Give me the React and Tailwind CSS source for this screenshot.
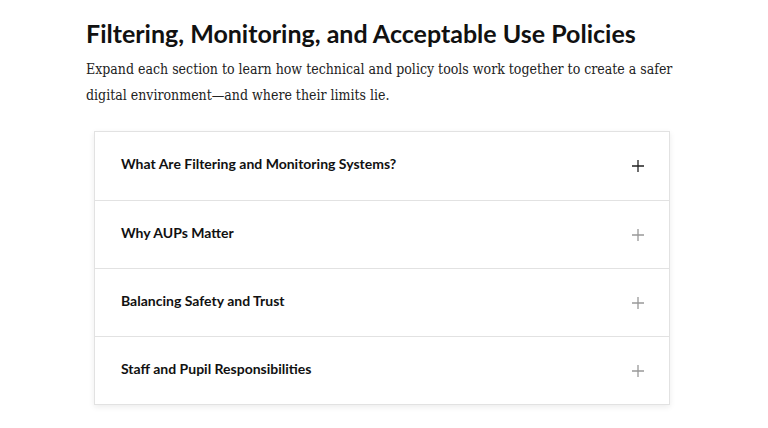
const ITEMS = [
  'What Are Filtering and Monitoring Systems?',
  'Why AUPs Matter',
  'Balancing Safety and Trust',
  'Staff and Pupil Responsibilities',
];

function Plus({ dark }) {
  return (
    <svg width="14" height="14" viewBox="0 0 14 14" className={dark ? 'text-[#222]' : 'text-[#999]'}>
      <path d="M7 1v12M1 7h12" stroke="currentColor" strokeWidth="1.3" fill="none" />
    </svg>
  );
}

export default function App() {
  return (
    <div className="min-h-screen bg-white">
      <div className="ml-[86px] w-[596px] pt-[16px]">
        <h1 className="text-[25px] leading-[34px] font-bold text-[#111] font-['Lato','Liberation_Sans',sans-serif]">
          Filtering, Monitoring, and Acceptable Use Policies
        </h1>
        <p className="mt-[6px] w-[604px] text-[14px] leading-[26px] text-[#222] font-['DejaVu_Serif_Condensed','DejaVu_Serif',serif]">
          Expand each section to learn how technical and policy tools work together to create a safer digital
          environment—and where their limits lie.
        </p>
        <div className="mt-[23px] mx-2 w-[576px] border border-[#e2e2e2] bg-white shadow-[0_2px_6px_rgba(0,0,0,0.08)]">
          {ITEMS.map((t, i) => (
            <div
              key={t}
              className={`flex h-[68px] items-center justify-between pl-[26px] pr-[24px] ${i > 0 ? 'border-t border-[#e2e2e2]' : ''}`}
            >
              <span className="mb-[5px] text-[14px] font-bold text-[#111] font-['Lato','Liberation_Sans',sans-serif]">{t}</span>
              <Plus dark={i === 0} />
            </div>
          ))}
        </div>
      </div>
    </div>
  );
}
